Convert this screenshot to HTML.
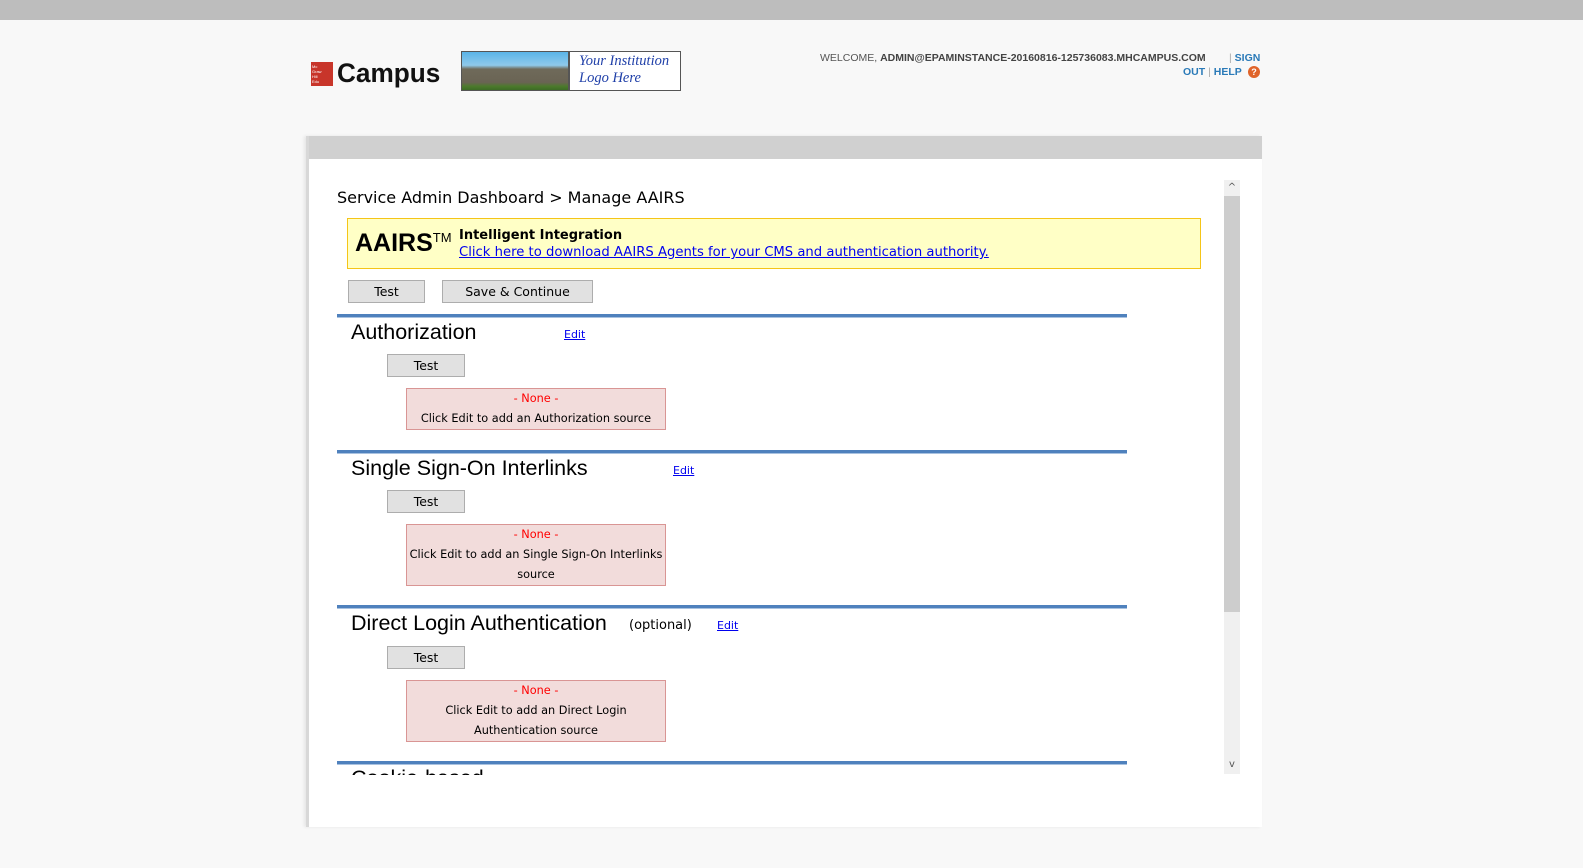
<!DOCTYPE html>
<html><head><meta charset="utf-8"><style>
*{margin:0;padding:0;box-sizing:border-box}
body{width:1583px;height:868px;background:#f8f8f8;font-family:"DejaVu Sans","Liberation Sans",sans-serif;position:relative;overflow:hidden}
.a{position:absolute}
.topbar{left:0;top:0;width:1583px;height:20px;background:#bdbdbd}
.panel{left:306px;top:136px;width:956px;height:691px;background:#fff;border-left:3px solid #d8d8d8;box-shadow:-2px 0 3px #e6e6e6}
.phead{left:309px;top:136px;width:953px;height:23px;background:#d0d0d0}
.btn{position:absolute;height:23px;background:#e1e1e1;border:1px solid #adadad;font-size:12.5px;text-align:center;line-height:22px;color:#000}
.line{position:absolute;left:337px;width:790px;height:4px;border-top:3px solid #4f81bd;border-bottom:1px solid #a9c2e0}
.h{position:absolute;font-family:"Liberation Sans",Arial,sans-serif;font-size:21.5px;color:#000}
.edit{position:absolute;font-size:11px;color:#00e;text-decoration:underline}
.pink{position:absolute;left:406px;width:260px;background:#f2dcdb;border:1px solid #d99594;font-size:11.3px;text-align:center;line-height:20px;color:#000}
.pink .r{color:#f00}
</style></head><body>
<div class="a topbar"></div>
<div class="a" style="left:311px;top:62px;width:22px;height:24px;background:#c8352a;color:#fff;font-size:4px;line-height:5px;padding:2px 1px;font-family:'Liberation Sans',sans-serif">Mc<br>Graw<br>Hill<br>Edu</div>
<div class="a" style="left:337px;top:58px;font-family:'Liberation Sans',Arial,sans-serif;font-weight:bold;font-size:27px;color:#111;transform:scaleX(0.97);transform-origin:left">Campus</div>
<div class="a" style="left:461px;top:51px;width:220px;height:40px;border:1px solid #555;background:#fff">
<div style="position:absolute;left:0;top:0;width:106px;height:38px;background:linear-gradient(#5ab4e8 0%,#8fc9ea 35%,#6f6a5a 45%,#6a6454 80%,#4c7a2c 90%,#3d6b25)"></div>
<div style="position:absolute;left:106px;top:0;width:2px;height:38px;background:#555"></div>
<div style="position:absolute;left:117px;top:1px;font-family:'Liberation Serif',serif;font-style:italic;font-size:14.5px;line-height:17px;color:#1f3fa8">Your Institution<br>Logo Here</div>
</div>
<div class="a" style="left:820px;top:52px;font-family:'Liberation Sans',Arial,sans-serif;font-size:10.5px;color:#555;white-space:nowrap">WELCOME, <b style="color:#444">ADMIN@EPAMINSTANCE-20160816-125736083.MHCAMPUS.COM</b></div>
<div class="a" style="left:1229px;top:52px;font-family:'Liberation Sans',Arial,sans-serif;font-size:10.5px;color:#2a7ab8;font-weight:bold"><span style="color:#aaa;font-weight:normal">|</span> SIGN</div>
<div class="a" style="left:1183px;top:66px;font-family:'Liberation Sans',Arial,sans-serif;font-size:10.5px;color:#2a7ab8;font-weight:bold">OUT <span style="color:#aaa;font-weight:normal">|</span> HELP</div>
<div class="a" style="left:1248px;top:66px;width:12px;height:12px;border-radius:50%;background:#e0642a;color:#fff;font-size:9px;font-weight:bold;text-align:center;line-height:12px;font-family:'Liberation Sans',sans-serif">?</div>

<div class="a panel"></div>
<div class="a phead"></div>

<div class="a" style="left:337px;top:188px;font-size:16px;color:#000">Service Admin Dashboard &gt; Manage AAIRS</div>
<div class="a" style="left:347px;top:218px;width:854px;height:51px;background:#ffffc6;border:1px solid #f5c518"></div>
<div class="a" style="left:355px;top:229px;font-family:'Liberation Sans',Arial,sans-serif;font-weight:bold;font-size:25px;color:#000">AAIRS<span style="font-weight:normal;font-size:13px;vertical-align:9px">TM</span></div>
<div class="a" style="left:459px;top:228px;font-size:13px;font-weight:bold;color:#000">Intelligent Integration</div>
<div class="a" style="left:459px;top:245px;font-size:13.2px;color:#00e;text-decoration:underline;white-space:nowrap">Click here to download AAIRS Agents for your CMS and authentication authority.</div>
<div class="btn" style="left:348px;top:280px;width:77px">Test</div>
<div class="btn" style="left:442px;top:280px;width:151px">Save &amp; Continue</div>

<div class="line" style="top:314px"></div>
<div class="h" style="left:351px;top:320px">Authorization</div>
<div class="edit" style="left:564px;top:328px">Edit</div>
<div class="btn" style="left:387px;top:354px;width:78px">Test</div>
<div class="pink" style="top:388px;height:42px"><span class="r">- None -</span><br>Click Edit to add an Authorization source</div>

<div class="line" style="top:450px"></div>
<div class="h" style="left:351px;top:456px">Single Sign-On Interlinks</div>
<div class="edit" style="left:673px;top:464px">Edit</div>
<div class="btn" style="left:387px;top:490px;width:78px">Test</div>
<div class="pink" style="top:524px;height:62px"><span class="r">- None -</span><br>Click Edit to add an Single Sign-On Interlinks<br>source</div>

<div class="line" style="top:605px"></div>
<div class="h" style="left:351px;top:611px">Direct Login Authentication</div>
<div class="a" style="left:629px;top:618px;font-size:13px">(optional)</div>
<div class="edit" style="left:717px;top:619px">Edit</div>
<div class="btn" style="left:387px;top:646px;width:78px">Test</div>
<div class="pink" style="top:680px;height:62px"><span class="r">- None -</span><br>Click Edit to add an Direct Login<br>Authentication source</div>

<div class="line" style="top:761px"></div>
<div class="a" style="left:340px;top:766px;width:800px;height:9px;overflow:hidden"><div class="h" style="left:11px;top:0">Cookie-based</div></div>

<div class="a" style="left:1224px;top:180px;width:16px;height:594px;background:#f0f0f0"></div>
<div class="a" style="left:1224px;top:196px;width:16px;height:416px;background:#cdcdcd"></div>
<div class="a" style="left:1224px;top:180px;width:16px;height:16px;text-align:center;font-size:10px;color:#555;line-height:16px">&#94;</div>
<div class="a" style="left:1224px;top:757px;width:16px;height:16px;text-align:center;font-size:10px;color:#555;line-height:16px">v</div>
</body></html>
